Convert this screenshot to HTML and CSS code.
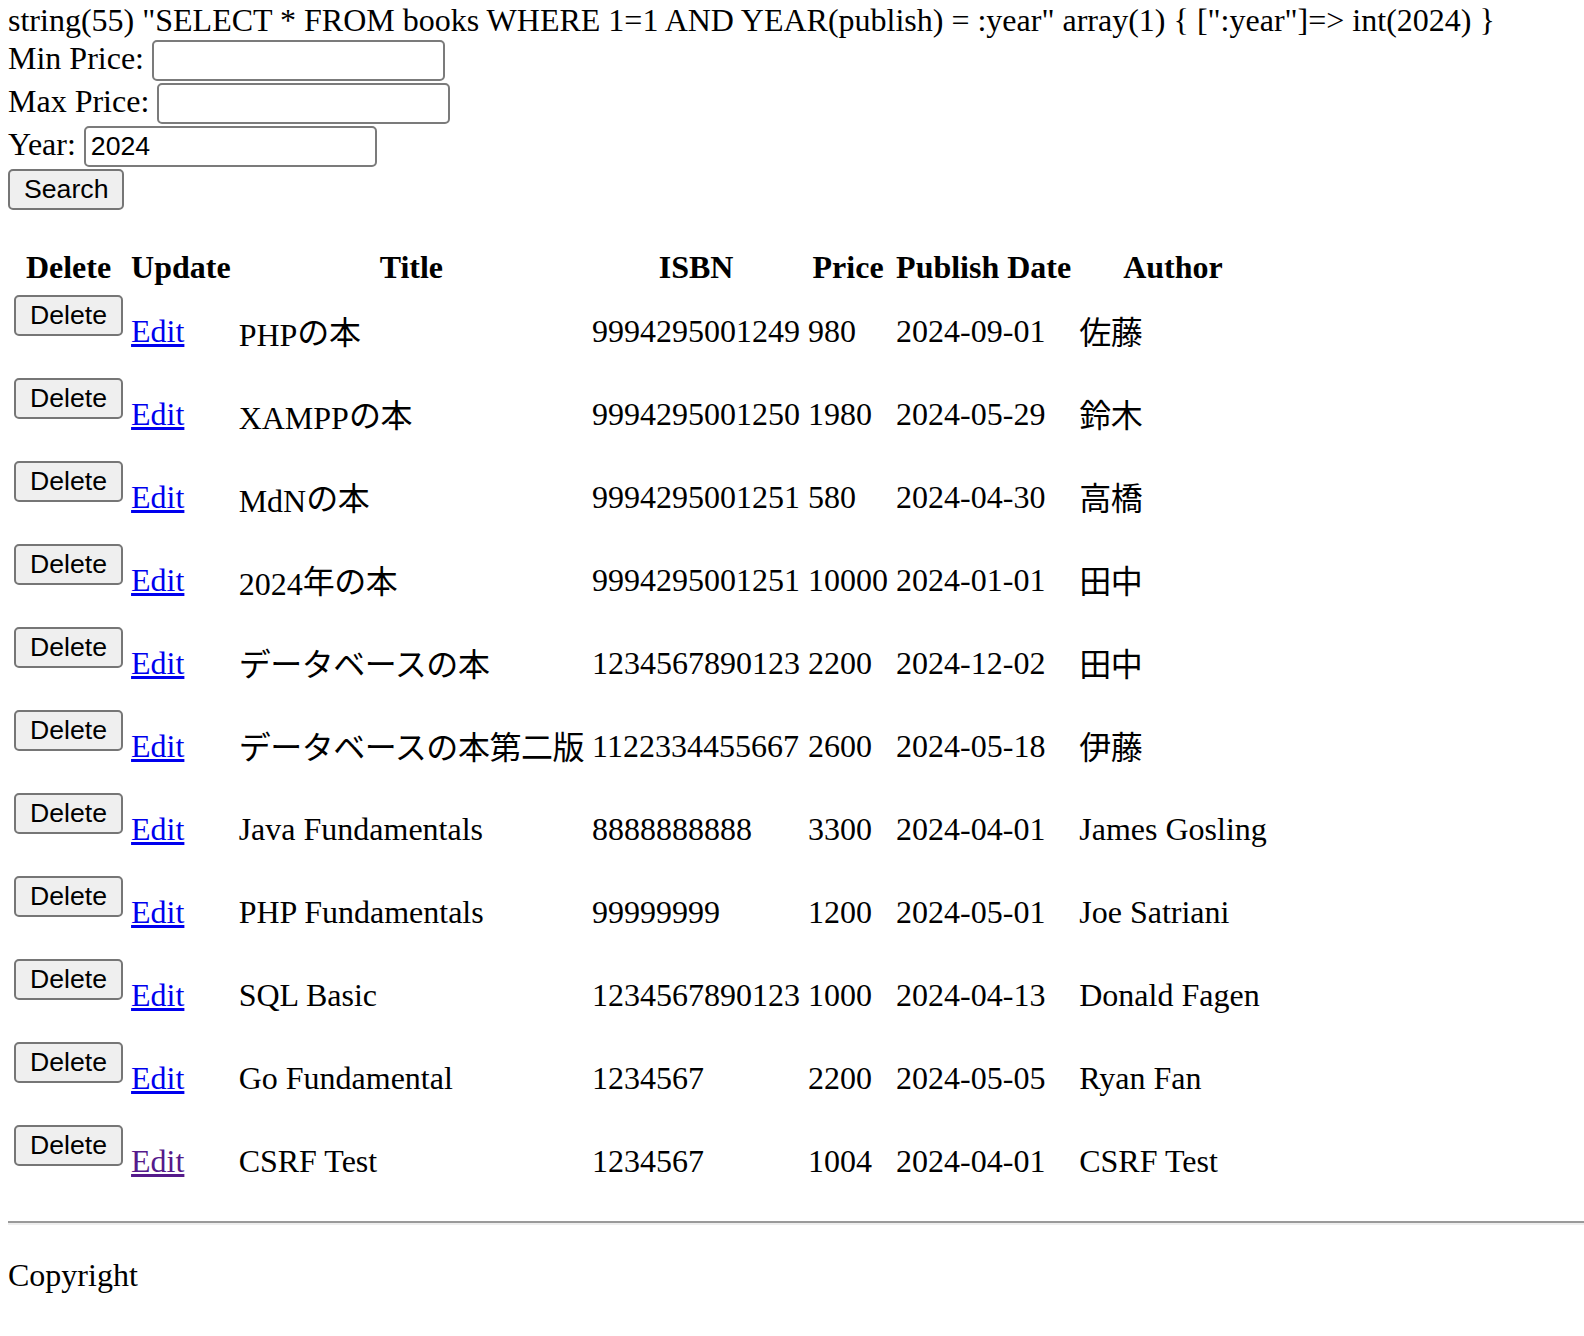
FILE: index.html
```html
<!DOCTYPE html>
<html lang="ja">
<head>
<meta charset="utf-8">
<title>Books</title>
<link rel="stylesheet" href="styles.css">
</head>
<body>
string(55) "SELECT * FROM books WHERE 1=1 AND YEAR(publish) = :year" array(1) { [":year"]=&gt; int(2024) }
<form class="search">
Min Price: <input class="field" type="text"><br>
Max Price: <input class="field" type="text"><br>
Year: <input class="field" type="text" value="2024"><br>
<button class="btn" type="button">Search</button>
</form>
<table class="books">
<tr><th>Delete</th><th>Update</th><th>Title</th><th>ISBN</th><th>Price</th><th>Publish Date</th><th>Author</th></tr>
<tr><td><form class="del"><button class="btn" type="button">Delete</button></form></td><td><a class="link" href="#">Edit</a></td><td>PHP<span class="ja">の本</span></td><td>9994295001249</td><td>980</td><td>2024-09-01</td><td><span class="ja">佐藤</span></td></tr>
<tr><td><form class="del"><button class="btn" type="button">Delete</button></form></td><td><a class="link" href="#">Edit</a></td><td>XAMPP<span class="ja">の本</span></td><td>9994295001250</td><td>1980</td><td>2024-05-29</td><td><span class="ja">鈴木</span></td></tr>
<tr><td><form class="del"><button class="btn" type="button">Delete</button></form></td><td><a class="link" href="#">Edit</a></td><td>MdN<span class="ja">の本</span></td><td>9994295001251</td><td>580</td><td>2024-04-30</td><td><span class="ja">高橋</span></td></tr>
<tr><td><form class="del"><button class="btn" type="button">Delete</button></form></td><td><a class="link" href="#">Edit</a></td><td>2024<span class="ja">年の本</span></td><td>9994295001251</td><td>10000</td><td>2024-01-01</td><td><span class="ja">田中</span></td></tr>
<tr><td><form class="del"><button class="btn" type="button">Delete</button></form></td><td><a class="link" href="#">Edit</a></td><td><span class="ja">データベースの本</span></td><td>1234567890123</td><td>2200</td><td>2024-12-02</td><td><span class="ja">田中</span></td></tr>
<tr><td><form class="del"><button class="btn" type="button">Delete</button></form></td><td><a class="link" href="#">Edit</a></td><td><span class="ja">データベースの本第二版</span></td><td>1122334455667</td><td>2600</td><td>2024-05-18</td><td><span class="ja">伊藤</span></td></tr>
<tr><td><form class="del"><button class="btn" type="button">Delete</button></form></td><td><a class="link" href="#">Edit</a></td><td>Java Fundamentals</td><td>8888888888</td><td>3300</td><td>2024-04-01</td><td>James Gosling</td></tr>
<tr><td><form class="del"><button class="btn" type="button">Delete</button></form></td><td><a class="link" href="#">Edit</a></td><td>PHP Fundamentals</td><td>99999999</td><td>1200</td><td>2024-05-01</td><td>Joe Satriani</td></tr>
<tr><td><form class="del"><button class="btn" type="button">Delete</button></form></td><td><a class="link" href="#">Edit</a></td><td>SQL Basic</td><td>1234567890123</td><td>1000</td><td>2024-04-13</td><td>Donald Fagen</td></tr>
<tr><td><form class="del"><button class="btn" type="button">Delete</button></form></td><td><a class="link" href="#">Edit</a></td><td>Go Fundamental</td><td>1234567</td><td>2200</td><td>2024-05-05</td><td>Ryan Fan</td></tr>
<tr><td><form class="del"><button class="btn" type="button">Delete</button></form></td><td><a class="link visited" href="#">Edit</a></td><td>CSRF Test</td><td>1234567</td><td>1004</td><td>2024-04-01</td><td>CSRF Test</td></tr>
</table>
<hr class="rule">
<p class="copy">Copyright</p>
</body>
</html>
```
FILE: styles.css
```css
html {
  background: #ffffff;
}
body {
  margin: 2px 0 0 8px;
  font-family: "Liberation Serif", "Noto Sans CJK JP", serif;
  font-size: 32px;
  line-height: normal;
  color: #000000;
}
.ja {
  letter-spacing: -0.45px;
  position: relative;
  top: -2px;
}
.search {
  margin: 0 0 32px 0;
}
.field {
  box-sizing: border-box;
  width: 293px;
  height: 41px;
  margin: 1px 0;
  padding: 0 5px;
  border: 2px solid #7b7b7b;
  border-radius: 5px;
  background: #ffffff;
  font-family: "Liberation Sans", Arial, sans-serif;
  font-size: 26.67px;
  color: #000000;
  vertical-align: baseline;
  outline: none;
}
.btn {
  box-sizing: border-box;
  height: 41px;
  margin: 1px 0;
  padding: 0 14px;
  border: 2px solid #767676;
  border-radius: 5px;
  background: #efefef;
  font-family: "Liberation Sans", Arial, sans-serif;
  font-size: 26.67px;
  color: #000000;
}
.books {
  border-collapse: separate;
  border-spacing: 4px;
}
.books th,
.books td {
  padding: 2px;
  vertical-align: middle;
  white-space: nowrap;
}
.books th {
  font-weight: bold;
  text-align: center;
}
.books td {
  text-align: left;
}
.del {
  margin: 0 0 32px 0;
}
.link {
  color: #0000ee;
  text-decoration: underline;
}
.link.visited {
  color: #551a8b;
}
.rule {
  margin: 16px 0 0 0;
  height: 0;
  border: 0;
  border-top: 2px solid #9a9a9a;
  border-bottom: 2px solid #eeeeee;
}
.copy {
  margin: 32px 0;
}
```
